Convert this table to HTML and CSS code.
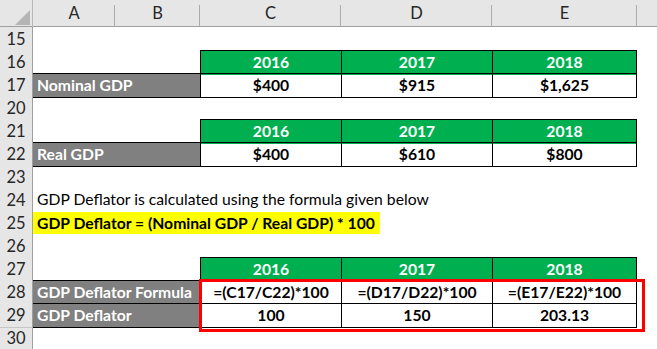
FILE: index.html
```html
<!DOCTYPE html>
<html>
<head>
<meta charset="utf-8">
<link rel="stylesheet" href="styles.css">
</head>
<body>
<div class="sheet">
  <div class="row colhead">
    <div class="corner"><span class="tri"></span></div>
    <div class="ch">A</div>
    <div class="ch">B</div>
    <div class="ch">C</div>
    <div class="ch">D</div>
    <div class="ch">E</div>
    <div class="ch"></div>
  </div>

  <div class="row"><div class="rh">15</div></div>
  <div class="row">
    <div class="rh">16</div>
    <div class="cell c bx th">2016</div>
    <div class="cell d bx th">2017</div>
    <div class="cell e bx th">2018</div>
  </div>
  <div class="row">
    <div class="rh">17</div>
    <div class="cell ab label bt bb">Nominal GDP</div>
    <div class="cell c bx bb val">$400</div>
    <div class="cell d bx bb val">$915</div>
    <div class="cell e bx bb val">$1,625</div>
  </div>
  <div class="row"><div class="rh">20</div></div>
  <div class="row">
    <div class="rh">21</div>
    <div class="cell c bx th">2016</div>
    <div class="cell d bx th">2017</div>
    <div class="cell e bx th">2018</div>
  </div>
  <div class="row">
    <div class="rh">22</div>
    <div class="cell ab label bt bb">Real GDP</div>
    <div class="cell c bx bb val">$400</div>
    <div class="cell d bx bb val">$610</div>
    <div class="cell e bx bb val">$800</div>
  </div>
  <div class="row"><div class="rh">23</div></div>
  <div class="row">
    <div class="rh">24</div>
    <div class="cell wide text">GDP Deflator is calculated using the formula given below</div>
  </div>
  <div class="row">
    <div class="rh">25</div>
    <div class="cell wide"><span class="hl">GDP Deflator = (Nominal GDP / Real GDP) * 100</span></div>
  </div>
  <div class="row"><div class="rh">26</div></div>
  <div class="row">
    <div class="rh">27</div>
    <div class="cell c bx th">2016</div>
    <div class="cell d bx th">2017</div>
    <div class="cell e bx th">2018</div>
  </div>
  <div class="redwrap">
    <div class="row">
      <div class="rh">28</div>
      <div class="cell ab label bt">GDP Deflator Formula</div>
      <div class="cell c bx val">=(C17/C22)*100</div>
      <div class="cell d bx val">=(D17/D22)*100</div>
      <div class="cell e bx val">=(E17/E22)*100</div>
    </div>
    <div class="row">
      <div class="rh">29</div>
      <div class="cell ab label bt bb">GDP Deflator</div>
      <div class="cell c bx bb val">100</div>
      <div class="cell d bx bb val">150</div>
      <div class="cell e bx bb val">203.13</div>
    </div>
  </div>
  <div class="row"><div class="rh">30</div></div>
</div>
</body>
</html>
```

FILE: styles.css
```css
* { box-sizing: border-box; }
html, body { margin: 0; padding: 0; background: #fff; }
body { font-family: Lato, "Liberation Sans", sans-serif; font-size: 15.7px; color: #000; overflow: hidden; }

.sheet { width: 657px; height: 349px; }

.row {
  display: grid;
  grid-template-columns: 33px 82px 85px 141px 151px 145px 20px;
  height: 23px;
}

.colhead {
  height: 27px;
  background: #e6e6e6;
  border-bottom: 1px solid #9f9f9f;
}
.corner {
  position: relative;
  border-right: 1px solid #b8b8b8;
}
.tri {
  position: absolute;
  left: 15px; top: 10px;
  width: 0; height: 0;
  border-style: solid;
  border-width: 0 0 15px 15px;
  border-color: transparent transparent #b5b5b5 transparent;
}
.ch {
  font-size: 16.5px;
  color: #262626;
  text-align: center;
  line-height: 27px;
  position: relative;
}
.ch + .ch::before {
  content: "";
  position: absolute;
  left: -1px; top: 5px; bottom: 0;
  width: 1px;
  background: #ababab;
}
.corner + .ch::before { display: none; }

.rh {
  grid-column: 1;
  background: #e6e6e6;
  border-right: 1px solid #9f9f9f;
  border-bottom: 1px solid #c6c6c6;
  color: #262626;
  font-size: 16.5px;
  text-align: center;
  line-height: 24px;
}

.cell { line-height: 23px; white-space: nowrap; overflow: visible; }
.c { grid-column: 4; }
.d { grid-column: 5; }
.e { grid-column: 6; }
.ab { grid-column: 2 / span 2; }
.wide { grid-column: 2 / 7; }

.bx { border-top: 1px solid #000; border-left: 1px solid #000; }
.e.bx { border-right: 1px solid #000; }
.bt { border-top: 1px solid #000; }
.bb { border-bottom: 1px solid #000; line-height: 22px; }

.th {
  background: #00b050;
  color: #fff;
  font-weight: 700;
  text-align: center;
  line-height: 23px;
}
.label {
  background: #808080;
  color: #fff;
  font-weight: 700;
  padding-left: 4px;
}
.val {
  font-weight: 700;
  text-align: center;
}
.text { padding-left: 4px; }
.hl {
  display: inline-block;
  background: #ffff00;
  font-weight: 700;
  padding: 0 5px 0 4px;
  height: 22px;
  margin-top: 1px;
  line-height: 22px;
}

.redwrap { position: relative; }
.redwrap::after {
  content: "";
  position: absolute;
  left: 199px; top: -1px;
  width: 440px; height: 47px;
  border: 3px solid #ff0000;
  pointer-events: none;
}
```
